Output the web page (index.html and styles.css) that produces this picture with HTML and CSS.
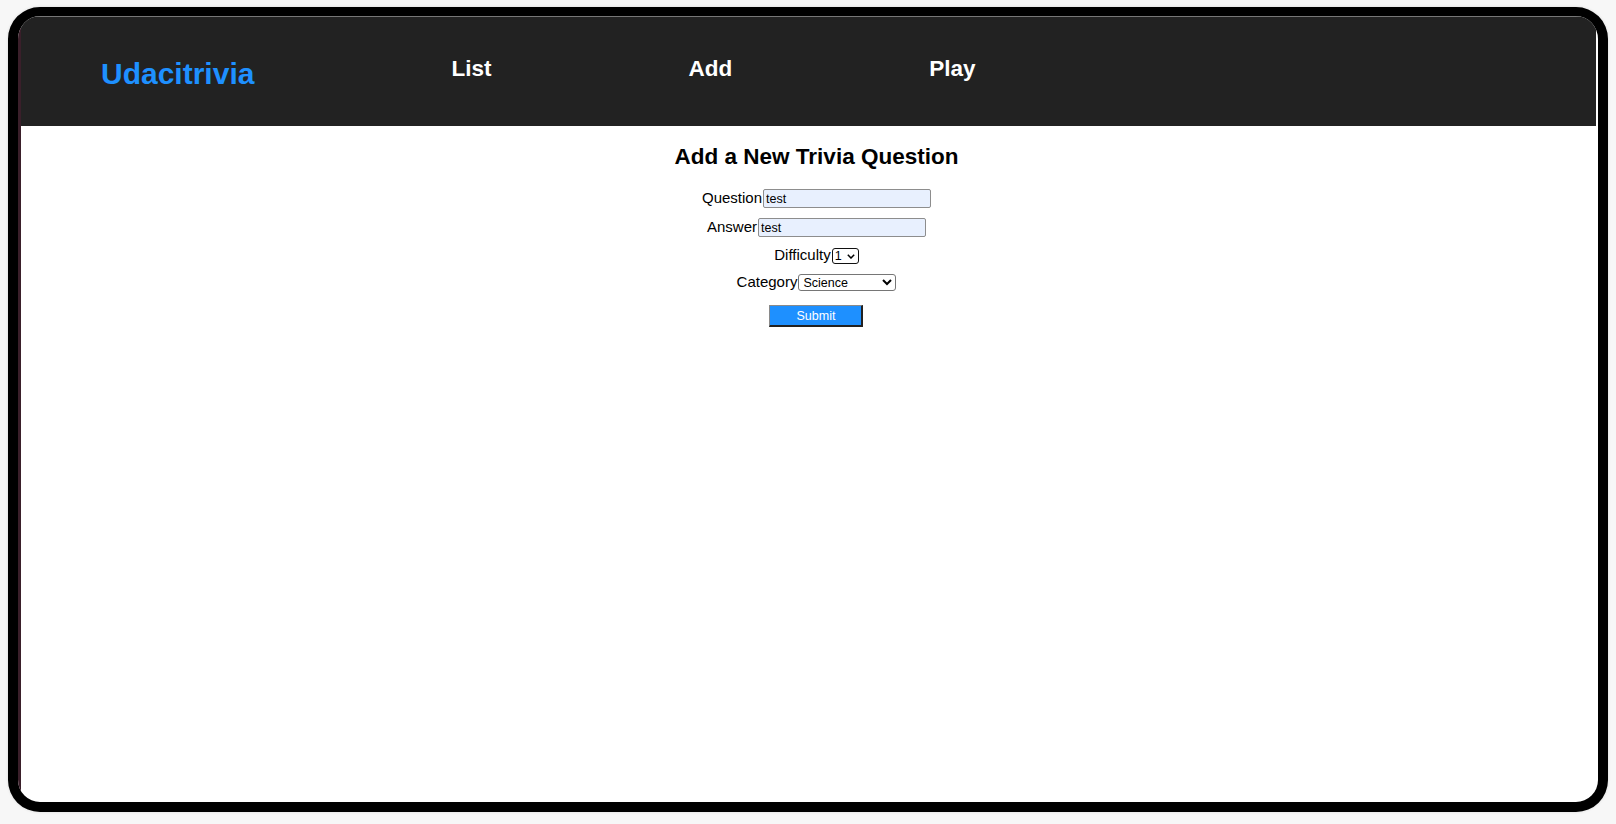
FILE: index.html
```html
<!DOCTYPE html>
<html lang="en">
<head>
<meta charset="utf-8">
<title>Udacitrivia</title>
<link rel="stylesheet" href="styles.css">
</head>
<body>
<div class="device">
  <div class="app">
    <header class="app-header">
      <h1 class="brand">Udacitrivia</h1>
      <h2 class="nav-item">List</h2>
      <h2 class="nav-item">Add</h2>
      <h2 class="nav-item">Play</h2>
    </header>
    <main class="add-view">
      <h2 class="view-title">Add a New Trivia Question</h2>
      <form class="form-view">
        <label class="field field-text"><span class="field-label">Question</span><input class="text-input" type="text" name="question" value="test"></label>
        <label class="field field-text"><span class="field-label">Answer</span><input class="text-input" type="text" name="answer" value="test"></label>
        <label class="field field-select"><span class="field-label">Difficulty</span><span class="select-wrap"><select class="select difficulty" name="difficulty"><option>1</option><option>2</option><option>3</option><option>4</option><option>5</option></select><svg class="chevron" width="8" height="5" viewBox="0 0 8 5" aria-hidden="true"><path d="M0.8 0.8 L4 4 L7.2 0.8" fill="none" stroke="#000" stroke-width="1.5"/></svg></span></label>
        <label class="field field-select"><span class="field-label">Category</span><select class="select category" name="category"><option>Science</option><option>Art</option><option>Geography</option><option>History</option><option>Entertainment</option><option>Sports</option></select></label>
        <input class="submit" type="submit" value="Submit">
      </form>
    </main>
  </div>
</div>
</body>
</html>
```

FILE: styles.css
```css
* {
  box-sizing: border-box;
}

html,
body {
  margin: 0;
  padding: 0;
}

body {
  width: 1616px;
  height: 824px;
  overflow: hidden;
  background: #f7f7f7;
  font-family: "Liberation Sans", Arial, sans-serif;
}

.device {
  margin: 7px 0 0 8px;
  width: 1600px;
  height: 805px;
  border: 10px solid #000;
  border-top-width: 9px;
  border-radius: 32px;
  overflow: hidden;
  background: #fff;
  box-shadow: 0 0 3px rgba(0, 0, 0, 0.12);
}

.app {
  height: 100%;
  border-left: 3px solid #3a1f2a;
  display: flex;
  flex-direction: column;
}

.app-header {
  flex: 0 0 auto;
  height: 110px;
  margin-right: 2px;
  background: #222;
  border-top: 1px solid #777;
  display: flex;
  align-items: flex-start;
  gap: 197px;
  padding: 39px 0 0 80px;
}

.brand {
  margin: 0;
  font-size: 30px;
  line-height: 35px;
  font-weight: bold;
  color: #1e90ff;
}

.nav-item {
  margin: 0;
  font-size: 22.5px;
  line-height: 26px;
  font-weight: bold;
  color: #fff;
}

.add-view {
  flex: 1 1 auto;
  display: flex;
  flex-direction: column;
  align-items: center;
  padding-left: 14px;
}

.view-title {
  margin: 18px 0 19px;
  font-size: 22.5px;
  line-height: 26px;
  font-weight: bold;
  color: #000;
}

.form-view {
  display: flex;
  flex-direction: column;
  align-items: center;
  gap: 10px;
}

.field {
  display: flex;
  align-items: center;
  font-size: 15px;
  color: #000;
}

.field-text {
  height: 19px;
}

.field-select {
  height: 17px;
}

.field-label {
  line-height: 15px;
  margin-bottom: 2px;
}

.text-input {
  width: 168px;
  height: 19px;
  margin: 0 0 0 1px;
  padding: 0 2px;
  border: 1px solid #8d8d8d;
  border-radius: 2px;
  background: #e8f0fe;
  color: #000;
  font: 12.5px "Liberation Sans", Arial, sans-serif;
}

.select {
  margin: 0 0 0 1px;
  padding: 0;
  background: #fff;
  color: #000;
  font: 12.5px "Liberation Sans", Arial, sans-serif;
}

.select-wrap {
  position: relative;
  display: flex;
}

.difficulty {
  appearance: none;
  -webkit-appearance: none;
  width: 27px;
  height: 16px;
  padding: 0 0 0 2px;
  line-height: 12px;
  border: 1.5px solid #111;
  border-radius: 3px;
}

.chevron {
  position: absolute;
  right: 4px;
  top: 6px;
  pointer-events: none;
}

.category {
  width: 98px;
  height: 17px;
  border: 1px solid #767676;
  border-radius: 3px;
}

.submit {
  margin-top: 4px;
  width: 94px;
  height: 22px;
  padding: 0;
  background: #1e90ff;
  color: #fff;
  font: 12.5px "Liberation Sans", Arial, sans-serif;
  border-style: solid;
  border-width: 1px 2px 2px 1px;
  border-color: #8a8a8a #222 #222 #8a8a8a;
}
```
